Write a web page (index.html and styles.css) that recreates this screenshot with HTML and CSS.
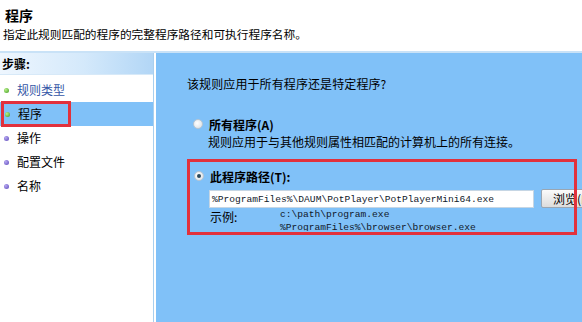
FILE: index.html
```html
<!DOCTYPE html>
<html>
<head>
<meta charset="utf-8">
<link rel="stylesheet" href="styles.css">
</head>
<body>
<div class="header">
  <div class="title">程序</div>
  <div class="subtitle">指定此规则匹配的程序的完整程序路径和可执行程序名称。</div>
</div>
<div class="main">
  <div class="sidebar">
    <div class="side-head">步骤:</div>
    <ul class="steps">
      <li class="step done link"><span class="dot green"></span><span class="label">规则类型</span></li>
      <li class="step current"><span class="mark"><span class="dot green"></span><span class="label">程序</span></span></li>
      <li class="step"><span class="dot purple"></span><span class="label">操作</span></li>
      <li class="step"><span class="dot purple"></span><span class="label">配置文件</span></li>
      <li class="step"><span class="dot purple"></span><span class="label">名称</span></li>
    </ul>
  </div>
  <div class="content">
    <div class="question">该规则应用于所有程序还是特定程序?</div>
    <div class="option opt-all">
      <div class="opt-row"><span class="radio"></span><span class="opt-label">所有程序(A)</span></div>
      <div class="opt-desc">规则应用于与其他规则属性相匹配的计算机上的所有连接。</div>
    </div>
    <div class="option opt-path">
      <div class="opt-row"><span class="radio checked"></span><span class="opt-label">此程序路径(T):</span></div>
      <div class="path-row">
        <div class="path-input">%ProgramFiles%\DAUM\PotPlayer\PotPlayerMini64.exe</div>
        <div class="browse">浏览(R)...</div>
      </div>
      <div class="example">
        <span class="ex-label">示例:</span>
        <span class="ex-values">c:\path\program.exe<br>%ProgramFiles%\browser\browser.exe</span>
      </div>
    </div>
  </div>
</div>
</body>
</html>
```

FILE: styles.css
```css
html, body {
  margin: 0;
  padding: 0;
  width: 582px;
  height: 322px;
  overflow: hidden;
  background: #ffffff;
  font-family: "Noto Sans CJK SC", "DejaVu Sans", sans-serif;
  font-size: 12px;
  color: #000;
}

.header {
  height: 51px;
  padding: 0 0 0 3px;
  box-sizing: border-box;
}

.title {
  font-size: 14px;
  font-weight: bold;
  line-height: 16px;
  padding-top: 7px;
  padding-left: 2px;
}

.subtitle {
  line-height: 16px;
  margin-top: 3px;
  font-size: 11.7px;
}

.main {
  display: flex;
  height: 271px;
  border-top: 2px solid #c9e2f7;
}

.sidebar {
  width: 153px;
  border-right: 1px solid #a9cfee;
  background: #ffffff;
  flex: none;
}

.side-head {
  height: 21px;
  line-height: 21px;
  padding-left: 2px;
  font-weight: bold;
  font-size: 12px;
  background: linear-gradient(to right, #eef6fe 0%, #d4e9fb 55%, #b2d6f6 100%);
  border-bottom: 1px solid #d7e9f8;
}

.steps {
  list-style: none;
  margin: 0;
  padding: 3px 0 0 0;
}

.step {
  height: 24px;
  display: flex;
  align-items: center;
  padding-left: 4px;
}

.step .label {
  margin-left: 8px;
  line-height: 16px;
}

.step.link .label {
  color: #3456a6;
}

.step.current {
  background: #80c1f8;
  padding-left: 1px;
}

.mark {
  display: flex;
  align-items: center;
  width: 63px;
  height: 20px;
  border: 3px solid #e2313c;
  padding-left: 1px;
}

.dot {
  width: 5px;
  height: 5px;
  border-radius: 50%;
  flex: none;
}

.dot.green {
  background: radial-gradient(circle at 35% 35%, #b9f08a, #3e9a1e);
}

.dot.purple {
  background: radial-gradient(circle at 35% 35%, #b7a8f2, #5a47b8);
}

.content {
  flex: 1;
  background: #80c1f8;
  border-left: 2px solid #ffffff;
  padding: 23px 0 0 31px;
}

.question {
  line-height: 16px;
  letter-spacing: 0.1px;
}

.option {
  display: flex;
  flex-direction: column;
}

.opt-all {
  margin-top: 24px;
  padding-left: 6px;
}

.opt-row {
  display: flex;
  align-items: center;
  height: 16px;
}

.radio {
  width: 10px;
  height: 10px;
  border-radius: 50%;
  border: 1px solid #b9c6d2;
  background: radial-gradient(circle at 40% 40%, #ffffff, #d8dde2);
  box-sizing: border-box;
  margin-right: 6px;
  flex: none;
  display: flex;
  align-items: center;
  justify-content: center;
}

.radio.checked::after {
  content: "";
  width: 4px;
  height: 4px;
  border-radius: 50%;
  background: #2b4a5e;
}

.opt-label {
  font-weight: bold;
}

.opt-desc {
  margin-left: 15px;
  line-height: 16px;
  margin-top: 2px;
}

.opt-path {
  position: relative;
  margin-top: 9px;
  height: 76px;
  padding: 9px 0 0 7px;
  box-sizing: border-box;
}

.opt-path::after {
  content: "";
  position: absolute;
  left: 0;
  top: 0;
  width: 390px;
  height: 76px;
  border: 3px solid #e2313c;
  box-sizing: border-box;
  pointer-events: none;
}

.path-row {
  display: flex;
  align-items: center;
  margin-top: 5px;
  margin-left: 15px;
}

.path-input {
  width: 325px;
  height: 18px;
  line-height: 18px;
  background: #ffffff;
  border: 1px solid #c6d6e4;
  padding-left: 2px;
  font-family: "Liberation Mono", "DejaVu Sans Mono", monospace;
  font-size: 9.6px;
  color: #10182a;
  white-space: nowrap;
  overflow: hidden;
  box-sizing: border-box;
}

.browse {
  margin-left: 7px;
  width: 60px;
  height: 19px;
  line-height: 17px;
  border: 1px solid #9aa6b2;
  border-radius: 2px;
  background: linear-gradient(#fbfbfb, #dcdcdc);
  box-sizing: border-box;
  padding-left: 11px;
  white-space: nowrap;
  flex: none;
}

.example {
  display: flex;
  margin-left: 16px;
  height: 23px;
  overflow: hidden;
}

.ex-label {
  width: 70px;
  line-height: 16px;
  margin-top: 1px;
  flex: none;
}

.ex-values {
  font-family: "Liberation Mono", "DejaVu Sans Mono", monospace;
  font-size: 9.6px;
  line-height: 13px;
  color: #10182a;
}
```
